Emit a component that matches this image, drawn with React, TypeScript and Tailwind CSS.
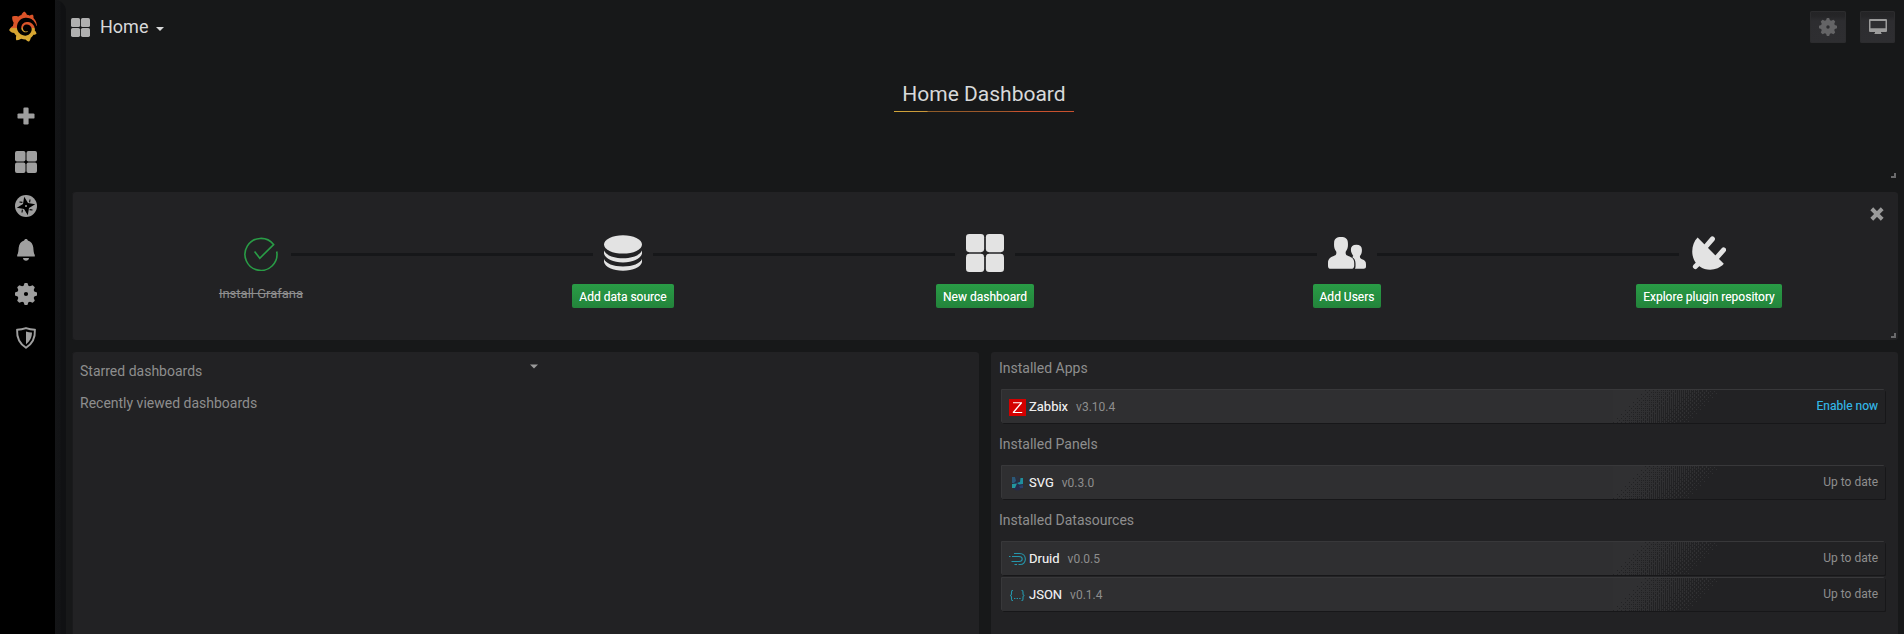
import type { ReactNode } from "react";
import { SiGrafana } from "react-icons/si";

type IconProps = { className?: string };

function AppsIcon({ className }: IconProps) {
  return (
    <svg viewBox="0 0 22 22" className={className} fill="currentColor">
      <rect x="0" y="0" width="10.5" height="10.5" rx="1.9" />
      <rect x="11.5" y="0" width="10.5" height="10.5" rx="1.9" />
      <rect x="0" y="11.5" width="10.5" height="10.5" rx="1.9" />
      <rect x="11.5" y="11.5" width="10.5" height="10.5" rx="1.9" />
    </svg>
  );
}

function PlusIcon({ className }: IconProps) {
  return (
    <svg viewBox="0 0 18 18" className={className} fill="currentColor">
      <rect x="6.4" y="0.5" width="5.2" height="17" rx="1.2" />
      <rect x="0.5" y="6.4" width="17" height="5.2" rx="1.2" />
    </svg>
  );
}

function CompassIcon({ className }: IconProps) {
  return (
    <svg viewBox="0 0 22 22" className={className}>
      <circle cx="11" cy="11" r="11" fill="currentColor" />
      <path
        d="M9.2 1.8 L13 8 L20.2 9.2 L14 13 L12.8 20.2 L9 14 L1.8 12.8 L8 9 Z"
        fill="#000"
      />
      <path
        d="M15 4.5 L14.6 7.4 M17.5 15 L14.6 14.6 M7 17.5 L7.4 14.6 M4.5 7 L7.4 7.4"
        stroke="#000"
        strokeWidth="1.1"
        fill="none"
      />
      <circle cx="11" cy="11" r="1" fill="currentColor" />
    </svg>
  );
}

function BellIcon({ className }: IconProps) {
  return (
    <svg viewBox="0 0 22 22" className={className} fill="currentColor">
      <path d="M11 0 C12 0 12.6 .6 12.8 1.4 C16 2.2 18 5 18.3 8.5 C18.6 12 18.6 13.8 19.8 16 V17.6 H2.2 V16 C3.4 13.8 3.4 12 3.7 8.5 C4 5 6 2.2 9.2 1.4 C9.4 .6 10 0 11 0 Z" />
      <path d="M8 19 H14 C13.8 20.8 12.6 21.7 11 21.7 C9.4 21.7 8.2 20.8 8 19 Z" />
    </svg>
  );
}

function GearIcon({ className }: IconProps) {
  return (
    <svg viewBox="0 0 22 22" className={className} fill="currentColor" fillRule="evenodd">
      <path d="M9.6 0 H12.4 L13.4 2.7 L14.9 3.3 L17.7 2.2 L19.8 4.3 L18.7 7.1 L19.3 8.6 L22 9.6 V12.4 L19.3 13.4 L18.7 14.9 L19.8 17.7 L17.7 19.8 L14.9 18.7 L13.4 19.3 L12.4 22 H9.6 L8.6 19.3 L7.1 18.7 L4.3 19.8 L2.2 17.7 L3.3 14.9 L2.7 13.4 L0 12.4 V9.6 L2.7 8.6 L3.3 7.1 L2.2 4.3 L4.3 2.2 L7.1 3.3 L8.6 2.7 Z M11 8.9 A2.1 2.1 0 1 0 11 13.1 A2.1 2.1 0 1 0 11 8.9 Z" />
    </svg>
  );
}

function ShieldIcon({ className }: IconProps) {
  return (
    <svg viewBox="0 0 22 22" className={className}>
      <path
        d="M11 1.1 C14 2.1 16.8 2.6 19.9 2.8 C20.3 10.5 17.8 16.6 11 20.8 C4.2 16.6 1.7 10.5 2.1 2.8 C5.2 2.6 8 2.1 11 1.1 Z"
        fill="none"
        stroke="currentColor"
        strokeWidth="1.9"
      />
      <path d="M11 4.4 C13 5 14.8 5.3 17 5.5 C16.9 10.3 15.2 14 11 17.2 Z" fill="currentColor" />
    </svg>
  );
}

function MonitorIcon({ className }: IconProps) {
  return (
    <svg viewBox="0 0 18 16" className={className} fill="currentColor" fillRule="evenodd">
      <path d="M1 0 H17 Q18 0 18 1 V12 Q18 13 17 13 H12 V14 L13 15 H5 L6 14 V13 H1 Q0 13 0 12 V1 Q0 0 1 0 Z M1.5 2 V9.3 H16.5 V2 Z" />
    </svg>
  );
}

function CheckIcon({ className }: IconProps) {
  return (
    <svg viewBox="0 0 34 34" className={className} fill="none" stroke="currentColor" strokeWidth="1.6">
      <path d="M32.7 14.5 A16 16 0 1 1 29.6 7.6 L15.8 21.2 L10.6 14.6" />
    </svg>
  );
}

function DatabaseIcon({ className }: IconProps) {
  return (
    <svg viewBox="0 0 38 36" className={className} fill="currentColor">
      <ellipse cx="19" cy="9.4" rx="19" ry="9.2" />
      <path d="M0 15.6 C2 20.2 9 23.2 19 23.2 C29 23.2 36 20.2 38 15.6 V18.5 C37 23.6 29 27.4 19 27.4 C9 27.4 1 23.6 0 18.5 Z" />
      <path d="M0 24 C2 28.6 9 31.4 19 31.4 C29 31.4 36 28.6 38 24 V27 C37 32.1 29 35.7 19 35.7 C9 35.7 1 32.1 0 27 Z" />
    </svg>
  );
}

function UsersIcon({ className }: IconProps) {
  return (
    <svg viewBox="0 0 38 32" className={className} fill="currentColor">
      <path d="M13 0 C17.5 0 20 2 19.9 6 C20.2 10 19.6 12 17.8 14.6 C17.2 17.2 18.2 18.2 20.2 19 C24.4 20.6 26.2 22 26.2 26 V29 C26 31 25 31.8 23 31.8 H3 C1 31.8 0 31 0 29 V26 C0 22 2 20.4 5.8 19 C7.8 18.2 8.8 17.2 8.2 14.6 C6.4 12 5.8 10 6.1 6 C6 2 8.5 0 13 0 Z" />
      <path d="M28.4 7.8 C32 7.8 34 9.6 33.9 12.6 C34 15.4 33.4 17 32 19 C31.6 20.8 32.4 21.6 34 22.2 C37 23.2 38 24.6 38 27.4 V29.6 C38 31.2 37 31.8 35.6 31.8 H27 C27.6 30.6 27.6 29 27.5 26 C27.4 23.6 26.4 21.4 24.2 20 C25.2 19.6 25.4 19.2 25 18.6 C23.6 16.4 22.9 15 22.9 12.6 C22.8 9.6 24.6 7.8 28.4 7.8 Z" />
    </svg>
  );
}

function PlugIcon({ className }: IconProps) {
  return (
    <svg viewBox="0 0 34 34" className={className} fill="currentColor">
      <path d="M5.6 1.6 L31.8 27.8 C26 34.6 14.6 35.6 7.8 30.4 C-2.2 24 -1.6 8.6 5.6 1.6 Z" />
      <path
        d="M14 10.4 L20.4 3 M25.2 21.2 L31.6 13.8 M3.4 30.6 L8 26"
        stroke="currentColor"
        strokeWidth="5"
        strokeLinecap="round"
      />
    </svg>
  );
}

function Caret({ className }: IconProps) {
  return (
    <svg viewBox="0 0 8 4" className={className} fill="currentColor">
      <path d="M0 0 H8 L4 4 Z" />
    </svg>
  );
}

function ResizeHandle() {
  return (
    <span className="absolute right-[2px] bottom-[2px] h-[5px] w-[5px] border-r-2 border-b-2 border-[#6a6a6c]" />
  );
}

/* Ordered-dither texture along a 45 degree ramp. */
const DITHER_ORDER = [
  [0, 12, 3, 10],
  [6, 14, 5, 9],
  [2, 11, 1, 13],
  [4, 8, 7, 15],
];
const DITHER_WIDTH = 116;
const DITHER_HEIGHT = 33;

function buildDither() {
  let d = "";
  for (let y = 0; y < DITHER_HEIGHT; y++) {
    for (let x = 0; x < DITHER_WIDTH; x++) {
      const t = (x + y - 28) / 84;
      const rank = (DITHER_ORDER[y % 4][x % 4] + 0.5) / 16;
      if (t < rank) d += `M${x} ${y}h1v1h-1z`;
    }
  }
  return d;
}
const DITHER_PATH = buildDither();

const sideIcons: { name: string; icon: ReactNode }[] = [
  { name: "create", icon: <PlusIcon className="h-[18px] w-[18px]" /> },
  { name: "dashboards", icon: <AppsIcon className="h-[22px] w-[22px]" /> },
  { name: "explore", icon: <CompassIcon className="h-[22px] w-[22px]" /> },
  { name: "alerting", icon: <BellIcon className="h-[22px] w-[22px]" /> },
  { name: "configuration", icon: <GearIcon className="h-[22px] w-[22px]" /> },
  { name: "admin", icon: <ShieldIcon className="h-[22px] w-[22px]" /> },
];

function SideMenu() {
  return (
    <aside className="flex w-[55px] shrink-0 flex-col bg-black text-[#9f9f9f]">
      <div className="flex h-[93px] pt-[11px] pl-[8px]">
        <svg width="0" height="0" className="absolute">
          <linearGradient id="logo-fill" x1="0" y1="0" x2="0" y2="1">
            <stop offset="0" stopColor="#dc5228" />
            <stop offset="0.53" stopColor="#d9562a" />
            <stop offset="0.57" stopColor="#d6a22f" />
            <stop offset="1" stopColor="#dcae35" />
          </linearGradient>
        </svg>
        <SiGrafana className="h-[31px] w-[30px] fill-[url(#logo-fill)]" />
      </div>
      <nav className="flex flex-col">
        {sideIcons.map((item) => (
          <div
            key={item.name}
            className="flex h-[44px] w-[52px] items-center justify-center first:mb-[2px] first:h-[45px]"
          >
            {item.icon}
          </div>
        ))}
      </nav>
    </aside>
  );
}

const navButton =
  "flex h-[32px] items-center justify-center rounded-[2px] bg-[linear-gradient(#242426_0px,#252527_5px,#2d2d30_10px,#2e2e31_100%)] shadow-[inset_0_0_0_1px_#2c2c2e]";

function NavBar() {
  return (
    <header className="flex h-[55px] items-start pt-[11px] pr-[9px] pl-[5px]">
      <div className="flex h-[32px] items-center text-[#d8d9da]">
        <AppsIcon className="h-[19px] w-[19px] text-[#b0b0b0]" />
        <span className="pl-[10px] text-[18px] leading-[32px]">Home</span>
        <Caret className="mt-[4px] ml-[8px] h-[4px] w-[8px]" />
      </div>
      <div className="ml-auto flex gap-[14px]">
        <button className={`${navButton} w-[36px] text-[#646466]`}>
          <GearIcon className="h-[18px] w-[18px]" />
        </button>
        <button className={`${navButton} w-[35px] text-[#9b9b9b]`}>
          <MonitorIcon className="h-[16px] w-[18px]" />
        </button>
      </div>
    </header>
  );
}

const steps: { label: string; icon: ReactNode; width: string }[] = [
  { label: "Add data source", icon: <DatabaseIcon className="h-[36px] w-[38px]" />, width: "w-[102px]" },
  { label: "New dashboard", icon: <AppsIcon className="h-[38px] w-[38px]" />, width: "w-[98px]" },
  { label: "Add Users", icon: <UsersIcon className="h-[32px] w-[38px]" />, width: "w-[68px]" },
  { label: "Explore plugin repository", icon: <PlugIcon className="h-[34px] w-[34px]" />, width: "w-[146px]" },
];

function StepCell({ icon, line, children }: { icon: ReactNode; line: boolean; children: ReactNode }) {
  return (
    <li className="relative flex w-[362px] flex-col items-center">
      <div className="flex h-[38px] items-center justify-center">{icon}</div>
      {line && <span className="absolute top-[19px] left-[211px] h-[3px] w-[302px] bg-[#161719]" />}
      {children}
    </li>
  );
}

function GettingStarted() {
  return (
    <section className="relative h-[148px] rounded-[3px] bg-[#222224] shadow-[inset_1px_0_0_#1a1a1c]">
      <svg viewBox="0 0 14 14" className="absolute top-[15px] right-[14px] h-[14px] w-[14px] text-[#9a9a9a]">
        <path d="M3.2 3.2 L10.8 10.8 M10.8 3.2 L3.2 10.8" stroke="currentColor" strokeWidth="4" strokeLinecap="square" />
      </svg>
      <ul className="flex pt-[42px] pl-[8px]">
        <StepCell line icon={<CheckIcon className="mt-[1px] h-[34px] w-[34px] text-[#299c46]" />}>
          <span className="mt-[12px] text-[13px] leading-[20px] text-[#8e8e8e] line-through">Install Grafana</span>
        </StepCell>
        {steps.map((step, i) => (
          <StepCell
            key={step.label}
            line={i < steps.length - 1}
            icon={<span className="text-[#e3e3e3]">{step.icon}</span>}
          >
            <button
              className={`${step.width} mt-[12px] h-[24px] rounded-[2px] bg-linear-to-b from-[#299c46] to-[#23843b] text-[12px] leading-[26px] whitespace-nowrap text-white [text-shadow:0_0_0.6px_rgba(255,255,255,0.55)]`}
            >
              {step.label}
            </button>
          </StepCell>
        ))}
      </ul>
      <ResizeHandle />
    </section>
  );
}

type Plugin = { name: string; version: string; icon: ReactNode; status: string; enable?: boolean };

const ZabbixLogo = (
  <svg viewBox="0 0 17 17" className="h-[17px] w-[17px]">
    <rect width="17" height="17" fill="#d40000" />
    <path d="M4 3.2 H13 V4.2 L5.6 13 H13.2 V14 H3.8 V13 L11.2 4.2 H4 Z" fill="#fff" />
  </svg>
);

const SvgLogo = (
  <svg viewBox="0 0 17 17" className="h-[17px] w-[17px]">
    <circle cx="8.5" cy="10" r="5.5" fill="#252b4a" />
    <path d="M3 2 H6 L7 6 L5 8 H3 Z" fill="#2b5878" />
    <path d="M6.5 1 H10.5 V7 H8 Z" fill="#2c2f3c" />
    <path d="M11.5 3 H14 V9 L10 9.6 L8 8 L11 7 Z" fill="#1f8f9f" />
    <path d="M3 9 L8 8.5 L6 13 H3 Z" fill="#2396a0" />
    <path d="M10 11 L14 10 V13 H11 Z" fill="#28406a" />
  </svg>
);

const DruidLogo = (
  <svg viewBox="0 0 17 17" className="h-[17px] w-[17px]" fill="none" stroke="#2596ab" strokeWidth="1.1">
    <path d="M5 2.5 H10.5 C18.2 2.5 18.2 13.5 11 13.5 H9.5" />
    <path d="M0 5.5 H1.5 M3 5.5 H10 C14.3 5.5 14.3 10.5 10 10.5 H2.5" />
    <path d="M5.5 13.5 H8" />
  </svg>
);

const JsonLogo = (
  <svg viewBox="0 0 17 17" className="h-[17px] w-[17px]" fill="none" stroke="#2596ab" strokeWidth="1.1">
    <path d="M4 3.5 H3.5 Q2.5 3.5 2.5 5 V7 Q2.5 8.5 1 8.5 Q2.5 8.5 2.5 10 V12 Q2.5 13.5 3.5 13.5 H4" />
    <path d="M12.5 3.5 H13 Q14 3.5 14 5 V7 Q14 8.5 15.5 8.5 Q14 8.5 14 10 V12 Q14 13.5 13 13.5 H12.5" />
    <path d="M5 11.5 H6.4 M7.6 11.5 H9 M10.2 11.5 H11.6" />
  </svg>
);

const pluginGroups: { title: string; items: Plugin[] }[] = [
  {
    title: "Installed Apps",
    items: [{ name: "Zabbix", version: "v3.10.4", icon: ZabbixLogo, status: "Enable now", enable: true }],
  },
  {
    title: "Installed Panels",
    items: [{ name: "SVG", version: "v0.3.0", icon: SvgLogo, status: "Up to date" }],
  },
  {
    title: "Installed Datasources",
    items: [
      { name: "Druid", version: "v0.0.5", icon: DruidLogo, status: "Up to date" },
      { name: "JSON", version: "v0.1.4", icon: JsonLogo, status: "Up to date" },
    ],
  },
];

function PluginRow({ plugin }: { plugin: Plugin }) {
  return (
    <div className="mb-[3px] flex h-[33px] items-stretch rounded-[1px] bg-[#222224] shadow-[-1px_-1px_0_0_rgba(255,255,255,0.1),1px_1px_0_0_rgba(0,0,0,0.3)]">
      <div className="flex w-[611px] items-center bg-[#2f2f31] pl-[7px]">
        <span className="pt-[2px]">{plugin.icon}</span>
        <span className="pl-[3px] text-[13px] text-[#ececec] [text-shadow:0_0_0.6px_rgba(236,236,236,0.55)]">
          {plugin.name}
        </span>
        <span className="pl-[8px] text-[12px] text-[#8e8e8e]">{plugin.version}</span>
      </div>
      <svg width="116" height="33" shapeRendering="crispEdges" className="shrink-0 fill-[#303032]">
        <path d={DITHER_PATH} />
      </svg>
      <span
        className={
          plugin.enable
            ? "ml-auto pr-[7px] text-[12px] leading-[32px] text-[#33b5e5] [text-shadow:0_0_0.6px_rgba(51,181,229,0.5)]"
            : "ml-auto pr-[7px] text-[12px] leading-[32px] text-[#8e8e8e]"
        }
      >
        {plugin.status}
      </span>
    </div>
  );
}

export default function App() {
  return (
    <div className="flex h-[634px] overflow-hidden bg-[#171819] font-[Roboto,sans-serif] text-[#d8d9da]">
      <SideMenu />
      <div className="w-[11px] shrink-0 rounded-tr-[11px] bg-[linear-gradient(90deg,#141517_0px,#131416_5px,#101113_6px,#101113_11px)]" />
      <main className="flex w-[1838px] flex-col">
        <NavBar />
        <div className="flex h-[579px] flex-col gap-[12px] pr-[6px] pl-[6px]">
          <section className="relative flex h-[125px] items-start justify-center">
            <div className="mt-[23px] mr-[2px] h-[34px] w-[180px] bg-[linear-gradient(90deg,#d2a63a_0px,#c9963a_33px,#8f5c28_34px,#a5562b_114px,#c8512e_122px,#c8512e_180px)] bg-[length:100%_1px] bg-bottom bg-no-repeat text-center text-[21px] leading-[32px]">
              Home Dashboard
            </div>
            <ResizeHandle />
          </section>
          <GettingStarted />
          <div className="flex flex-1 gap-[12px]">
            <section className="relative w-[907px] rounded-t-[3px] bg-[#222224] pt-[3px] pl-[8px] text-[14px] leading-[32px] text-[#8e8e8e] shadow-[inset_1px_0_0_#1a1a1c]">
              <h2>Starred dashboards</h2>
              <h2>Recently viewed dashboards</h2>
              <Caret className="absolute top-[12px] left-[458px] h-[5px] w-[8px] text-[#9a9a9a]" />
            </section>
            <section className="w-[907px] rounded-t-[3px] bg-[#222224] pl-[8px]">
              {pluginGroups.map((group) => (
                <div key={group.title} className="pb-[2px]">
                  <h2 className="h-[38px] text-[14px] leading-[32px] text-[#8e8e8e]">{group.title}</h2>
                  <div className="ml-[3px] w-[883px]">
                    {group.items.map((plugin) => (
                      <PluginRow key={plugin.name} plugin={plugin} />
                    ))}
                  </div>
                </div>
              ))}
            </section>
          </div>
        </div>
      </main>
    </div>
  );
}
